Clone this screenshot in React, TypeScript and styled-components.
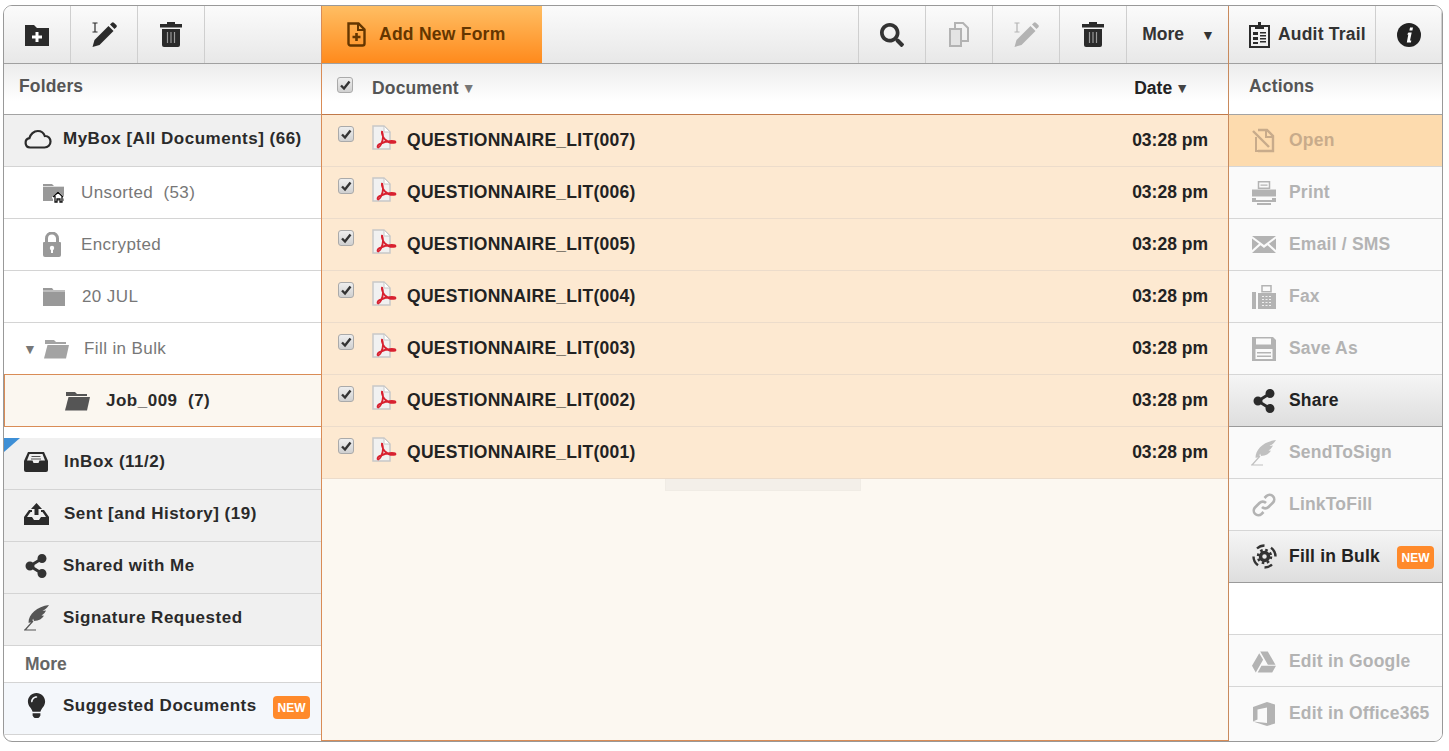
import React from "react";
import styled, { createGlobalStyle } from "styled-components";
import { FaSearch, FaShareAlt, FaGoogleDrive, FaLightbulb } from "react-icons/fa";

const GlobalStyle = createGlobalStyle`
  html, body {
    margin: 0;
    padding: 0;
    background: #fff;
    overflow: hidden;
    font-family: "Liberation Sans", Arial, sans-serif;
  }
`;

const Frame = styled.div`
  display: flex;
  width: 1440px;
  height: 737px;
  margin: 5px 0 0 3px;
  box-sizing: border-box;
  border: 1px solid #999;
  border-radius: 9px;
  overflow: hidden;
  background: #fff;
`;

const Column = styled.div<{ $width: number }>`
  display: flex;
  flex-direction: column;
  width: ${(p) => p.$width}px;
  flex: none;
`;

const Toolbar = styled.div`
  display: flex;
  height: 58px;
  flex: none;
  box-sizing: border-box;
  border-bottom: 1px solid #a0a0a0;
  background: linear-gradient(#fbfbfb, #e8e8e8);
`;

const ToolButton = styled.div<{ $width?: number; $edge?: "left" | "right" }>`
  display: flex;
  align-items: center;
  justify-content: center;
  width: ${(p) => p.$width ?? 67}px;
  flex: none;
  box-sizing: border-box;
  ${(p) => (p.$edge === "left" ? "border-left: 1px solid #cfcfcf;" : "border-right: 1px solid #cfcfcf;")}
  font-size: 17.5px;
  font-weight: bold;
  color: #333;
`;

const MoreButton = styled(ToolButton)`
  padding-left: 2px;
`;

const AuditButton = styled(ToolButton)`
  justify-content: flex-start;
  gap: 8px;
  padding-left: 20px;
  letter-spacing: 0.2px;
`;

const Spacer = styled.div`
  flex: 1;
`;

const AddForm = styled.div`
  display: flex;
  align-items: center;
  gap: 13px;
  width: 220px;
  box-sizing: border-box;
  padding-left: 25px;
  background: linear-gradient(#ffbe63, #ff8a1c);
  font-size: 17.5px;
  font-weight: bold;
  letter-spacing: 0.25px;
  color: #643600;
`;

const MoreCaret = styled.span`
  margin-left: 17px;
  font-size: 14px;
  color: #333;
`;

const ColumnHead = styled.div<{ $pad?: number }>`
  display: flex;
  align-items: center;
  height: 51px;
  flex: none;
  box-sizing: border-box;
  padding: 0 15px 6px ${(p) => p.$pad ?? 15}px;
  border-bottom: 1px solid #a3a3a3;
  background: linear-gradient(#ececec, #fff 75%);
  font-size: 17.5px;
  font-weight: bold;
  letter-spacing: 0.15px;
  color: #555;
`;

const DocColumn = styled(Column)`
  box-sizing: border-box;
  border-left: 1px solid #d98c56;
  border-right: 1px solid #c98a5c;
  border-bottom: 1px solid #d98c56;
  background: #fcf8f1;
`;

const DocHead = styled(ColumnHead)`
  padding: 0 39px 2px 15px;
  border-bottom-color: #c0794a;
`;

const DocTitle = styled.div`
  display: flex;
  align-items: center;
  gap: 3px;
  margin-left: 19px;
  flex: 1;
  color: #555;
`;

const SortCaret = styled.span`
  font-size: 14px;
  color: #777;
`;

const DateTitle = styled.div`
  display: flex;
  align-items: center;
  gap: 3px;
  letter-spacing: 0;
  color: #222;
`;

const DateCaret = styled(SortCaret)`
  color: #444;
`;

const DocRow = styled.div`
  display: flex;
  align-items: center;
  height: 52px;
  box-sizing: border-box;
  padding: 0 20px 0 16px;
  border-bottom: 1px solid #ecdccb;
  background: #fde9d1;
  font-size: 17.5px;
  font-weight: bold;
  color: #222;
`;

const DocIcon = styled.span`
  display: flex;
  margin-left: 18px;
  transform: translateY(-3px);
`;

const DocName = styled.span`
  flex: 1;
  margin-left: 9px;
  letter-spacing: 0.27px;
`;

const TabStub = styled.div`
  width: 196px;
  height: 12px;
  margin-left: 343px;
  background: #f3efe9;
  border: 1px solid #f0ece5;
  border-top: none;
  box-sizing: border-box;
`;

const Box = styled.span<{ $nudge?: number }>`
  display: flex;
  align-items: center;
  justify-content: center;
  width: 16px;
  height: 16px;
  flex: none;
  box-sizing: border-box;
  transform: translateY(${(p) => p.$nudge ?? -7}px);
  border: 1px solid #aaa;
  border-radius: 3px;
  background: linear-gradient(#eee, #d0d0d0);
`;

const List = styled.div`
  display: flex;
  flex-direction: column;
  flex: 1;
`;

type FolderTone = "plain" | "root" | "grey" | "pick" | "tip";

const folderBg: Record<FolderTone, string> = {
  plain: "#fff",
  root: "#f0f0f0",
  grey: "#f0f0f0",
  pick: "#fbf7f0",
  tip: "#f4f7fb",
};

const folderPad: Record<FolderTone, number> = {
  plain: 0,
  root: 4,
  grey: 4,
  pick: 0,
  tip: 6,
};

const FolderRow = styled.div<{ $tone: FolderTone; $indent: number }>`
  position: relative;
  display: flex;
  align-items: center;
  height: 52px;
  flex: none;
  box-sizing: border-box;
  padding-left: ${(p) => p.$indent}px;
  padding-bottom: ${(p) => folderPad[p.$tone]}px;
  background: ${(p) => folderBg[p.$tone]};
  border-bottom: 1px solid #d4d4d4;
  font-size: 17px;
  font-weight: ${(p) => (p.$tone === "plain" ? "normal" : "bold")};
  letter-spacing: ${(p) => (p.$tone === "plain" ? "0.4px" : "0.5px")};
  color: ${(p) => (p.$tone === "plain" ? "#777" : "#2a2a2a")};
  white-space: pre;
  ${(p) =>
    p.$tone === "pick"
      ? `border: 1px solid #d98c56; margin-top: -1px; height: 53px; margin-right: -1px; z-index: 1;`
      : ""}
`;

const IconSlot = styled.span<{ $width: number }>`
  display: flex;
  align-items: center;
  width: ${(p) => p.$width}px;
  flex: none;
`;

const Gap = styled.div`
  height: 11px;
  flex: none;
  background: #fff;
`;

const CornerFlag = styled.span`
  position: absolute;
  left: 0;
  top: 0;
  width: 0;
  height: 0;
  border-top: 14px solid #3d8fd6;
  border-right: 16px solid transparent;
`;

const MoreLabel = styled.div`
  display: flex;
  align-items: center;
  height: 37px;
  flex: none;
  box-sizing: border-box;
  padding-left: 21px;
  border-bottom: 1px solid #d4d4d4;
  font-size: 17.5px;
  font-weight: bold;
  color: #666;
`;

const NewBadge = styled.span<{ $top: number; $right: number }>`
  position: absolute;
  top: ${(p) => p.$top}px;
  right: ${(p) => p.$right}px;
  width: 37px;
  height: 23px;
  border-radius: 4px;
  background: #ff8a2b;
  color: #fff;
  font-size: 12px;
  font-weight: bold;
  letter-spacing: 0;
  line-height: 24px;
  text-align: center;
`;

type ActionTone = "off" | "on" | "open";

const ActionRow = styled.div<{ $tone: ActionTone; $low?: boolean }>`
  position: relative;
  display: flex;
  align-items: center;
  height: 52px;
  flex: none;
  box-sizing: border-box;
  padding-left: 20px;
  padding-top: ${(p) => (p.$low ? 2 : 0)}px;
  font-size: 17.5px;
  font-weight: bold;
  letter-spacing: 0.2px;
  border-bottom: 1px solid ${(p) => (p.$tone === "on" ? "#9a9a9a" : "#d6d6d6")};
  color: ${(p) => (p.$tone === "on" ? "#222" : p.$tone === "open" ? "#c8ab8b" : "#b3b3b3")};
  background: ${(p) =>
    p.$tone === "on"
      ? "linear-gradient(#f5f5f5, #dedede)"
      : p.$tone === "open"
      ? "#fddbae"
      : "#fafafa"};

  &:last-child {
    flex: 1;
    padding-bottom: 3px;
    border-bottom: none;
  }
`;

const ActionGap = styled.div`
  height: 52px;
  flex: none;
  box-sizing: border-box;
  border-bottom: 1px solid #d6d6d6;
  background: #fff;
`;

const ActionIcon = styled.span`
  display: flex;
  align-items: center;
  justify-content: center;
  width: 30px;
  margin-right: 10px;
  flex: none;
`;

const Check = () => (
  <svg width="12" height="12" viewBox="0 0 12 12">
    <path d="M2 6.5 5 9.5 10.5 2.5" fill="none" stroke="#333" strokeWidth="2.4" />
  </svg>
);

const FolderPlus = () => (
  <svg width="24" height="22" viewBox="0 0 24 22">
    <path d="M0 1h9l3 3h12v18H0z" fill="#2b2b2b" />
    <path d="M12 8v10M7 13h10" stroke="#fff" strokeWidth="3" />
  </svg>
);

const Rename = ({ color }: { color: string }) => (
  <svg width="26" height="26" viewBox="0 0 26 26">
    <path d="M1.5 1h5M1.5 10h5M4 1v9" fill="none" stroke={color} strokeWidth="1.2" />
    <path d="M1.5 25l2-7L17.5 4l5 5L8.5 23z" fill={color} />
    <path d="M19 2.5l1.8-1.8a1.5 1.5 0 0 1 2.1 0l2.4 2.4a1.5 1.5 0 0 1 0 2.1L23.5 7z" fill={color} />
  </svg>
);

const Trash = () => (
  <svg width="22" height="25" viewBox="0 0 22 25">
    <path d="M7 0h8v2h7v3.5H0V2h7z" fill="#2b2b2b" />
    <path d="M2 7h18v16a2 2 0 0 1-2 2H4a2 2 0 0 1-2-2z" fill="#2b2b2b" />
    <path d="M7.5 10v11M11 10v11M14.5 10v11" stroke="#999" strokeWidth="1.2" />
  </svg>
);

const AddDoc = () => (
  <svg width="19" height="25" viewBox="0 0 19 25">
    <path d="M1.5 1.5h10l6 6v14a2 2 0 0 1-2 2h-12a2 2 0 0 1-2-2z" fill="none" stroke="#643600" strokeWidth="2.4" />
    <path d="M11 1.5V8h6.5" fill="none" stroke="#643600" strokeWidth="2" />
    <path d="M9.5 11v8M5.5 15h8" stroke="#643600" strokeWidth="2.6" />
  </svg>
);

const Copies = () => (
  <svg width="20" height="25" viewBox="0 0 20 25">
    <path d="M1 7h11v17H1z" fill="#e4e4e4" stroke="#b3b3b3" strokeWidth="2" />
    <path d="M6 6V1h8l5 5v13h-6" fill="none" stroke="#b3b3b3" strokeWidth="2" />
  </svg>
);

const Clipboard = () => (
  <svg width="21" height="26" viewBox="0 0 21 26">
    <path d="M1 4h19v21H1z" fill="none" stroke="#2b2b2b" strokeWidth="2" />
    <path d="M6 7V3h3V0h3v3h3v4z" fill="#2b2b2b" />
    <path d="M4 10h5v3H4zM4 15h5v3H4zM4 20h5v2H4zM11 10h6v1.5h-6zM11 13h6v1.5h-6zM11 16h6v1.5h-6zM11 19h6v1.5h-6z" fill="#2b2b2b" />
  </svg>
);

const Info = () => (
  <svg width="24" height="24" viewBox="0 0 24 24">
    <circle cx="12" cy="12" r="12" fill="#222" />
    <path d="M13 4.5h3l-.6 3h-3zM11.5 9.5h3.2l-1.7 8h1.3l-.4 2H9.8l1.5-8h-1.2z" fill="#fff" />
  </svg>
);

const Pdf = () => (
  <svg width="26" height="26" viewBox="0 0 26 26">
    <path d="M1 1h11l6 6v17H1z" fill="#f1f1f1" stroke="#c8c8c8" strokeWidth="1.5" />
    <path d="M12 1l6 6h-6z" fill="#fff" stroke="#c8c8c8" />
    <path
      d="M10 6c-.6 3 1 6 3 8.5 2.5 2.5 6 4 10 3.2.8-.3.6-1.5-1-1.6-5-.4-10 .6-14.5 3-2 1.2-2.5 3-1.5 3.4 1.5.4 5-5 5-11 0-2.5-1-5-1-5.5z"
      fill="none"
      stroke="#d8202f"
      strokeWidth="1.8"
    />
  </svg>
);

const Cloud = () => (
  <svg width="28" height="20" viewBox="0 0 28 20">
    <path
      d="M6 18.5a4.7 4.7 0 0 1-.6-9.3C6.4 5.4 9.8 2 13.8 2c3.4 0 6 2 7 5 3.5-.2 5.7 2.4 5.7 5.5 0 3.3-2.5 6-6 6z"
      fill="none"
      stroke="#2b2b2b"
      strokeWidth="2.2"
    />
  </svg>
);

const FolderHome = () => (
  <svg width="23" height="20" viewBox="0 0 23 20">
    <path d="M0 1h9l2 2h10v15H0z" fill="#999" />
    <path d="M0 3.5h21" stroke="#ddd" strokeWidth="1" />
    <path d="M9 14l6-6 6.5 6v1.5H20V20h-3.5v-3.5h-3V20H10v-4.5H9z" fill="#fff" />
    <path d="M10 14l5-4.8 5 4.8M12 13v6h2v-3h3v3h2v-6" fill="none" stroke="#111" strokeWidth="1.3" />
  </svg>
);

const Lock = () => (
  <svg width="18" height="25" viewBox="0 0 18 25">
    <path d="M3.5 11V6.5a5.5 5.5 0 0 1 11 0V11" fill="none" stroke="#999" strokeWidth="3" />
    <path d="M1 10h16a1 1 0 0 1 1 1v12a2 2 0 0 1-2 2H2a2 2 0 0 1-2-2V11a1 1 0 0 1 1-1z" fill="#999" />
    <circle cx="9" cy="16" r="2.2" fill="#fff" />
    <path d="M8 16h2v5H8z" fill="#fff" />
  </svg>
);

const Folder = () => (
  <svg width="22" height="20" viewBox="0 0 22 20">
    <path d="M0 1h9l1.5 2H22v16H0z" fill="#999" />
    <path d="M0 4h22" stroke="#e2e2e2" strokeWidth="1" />
  </svg>
);

const FolderOpen = ({ color }: { color: string }) => (
  <svg width="25" height="20" viewBox="0 0 25 20">
    <path d="M1 1h9l2 2h10v2H1z" fill={color} />
    <path d="M3.5 6H25l-3 13.5H0z" fill={color} />
  </svg>
);

const Tray = () => (
  <svg width="24" height="20" viewBox="0 0 24 20">
    <path d="M4 0h16l4 9v9a2 2 0 0 1-2 2H2a2 2 0 0 1-2-2V9z" fill="#2b2b2b" />
    <path d="M5.5 2h13L21 8.5h-5.500l-1 2.500h-5l-1-2.500H3z" fill="#f0f0f0" />
    <path d="M7.5 4.5h9M7 7h10" stroke="#555" strokeWidth="1" />
  </svg>
);

const Outbox = () => (
  <svg width="25" height="22" viewBox="0 0 25 22">
    <path d="M12.5 0L18 6h-3.500v6h-4V6H7z" fill="#2b2b2b" />
    <path d="M5 7h3v2H6.5L3 14h5l2 3h5l2-3h5l-3.500-5H17V7h3l5 7v8H0v-8z" fill="#2b2b2b" />
  </svg>
);

const Quill = ({ color }: { color: string }) => (
  <svg width="26" height="26" viewBox="0 0 26 26">
    <path d="M25 0C23 3 21.500 4.500 18.500 6l3.500-.5c-1 2-2 3.500-4.500 5l2.500.2c-2 3-5 5-10 5.300l-1-2.500-1 4c-1.500 0-2.500 0-3.500.3C4.500 9 13 1.500 25 0z" fill={color} />
    <path d="M1 25l8-9M0 25h12" stroke={color} strokeWidth="1.2" fill="none" />
  </svg>
);

const Print = () => (
  <svg width="24" height="24" viewBox="0 0 24 24">
    <path d="M6.5.8h11v6.500h-11z" fill="none" stroke="#b3b3b3" strokeWidth="1.5" />
    <path d="M8.5 3.500h7v1.200h-7z" fill="#b3b3b3" />
    <path d="M0 8.500h24v7H0zM0 17h4v2h16v-2h4v4H0zM5 22h14v2H5z" fill="#b3b3b3" />
  </svg>
);

const Mail = () => (
  <svg width="24" height="17" viewBox="0 0 24 17">
    <path d="M0 0h24L12 9z" fill="#b3b3b3" />
    <path d="M0 2.500l7 5.300L0 14zM24 2.500l-7 5.300 7 6.200z" fill="#b3b3b3" />
    <path d="M0 17l8.500-7.800L12 12l3.500-2.800L24 17z" fill="#b3b3b3" />
  </svg>
);

const Fax = () => (
  <svg width="24" height="24" viewBox="0 0 24 24">
    <path d="M0 7h4v17H0z" fill="#b3b3b3" />
    <path d="M10 .8h9v6h-9z" fill="none" stroke="#b3b3b3" strokeWidth="1.5" />
    <path d="M6 8h18v16H6z" fill="#b3b3b3" />
    <path d="M10 11.500h10M10 14.500h10M10 17.500h10M10 20.500h10" stroke="#eee" strokeWidth="1" strokeDasharray="2 1.5" />
  </svg>
);

const Floppy = () => (
  <svg width="24" height="24" viewBox="0 0 24 24">
    <path d="M0 0h21l3 3v21H0z" fill="#b3b3b3" />
    <path d="M4 1.500h15v6H4z" fill="#fafafa" />
    <path d="M3.500 12h17v10h-17z" fill="#fafafa" />
    <path d="M5 15h14v1.500H5zM5 18.500h14V20H5z" fill="#b3b3b3" />
  </svg>
);

const OpenDoc = () => (
  <svg width="25" height="25" viewBox="0 0 25 25">
    <path d="M6 2h9l6 6v15H6" fill="none" stroke="#c8ab8b" strokeWidth="2.4" />
    <path d="M14 2v7h7" fill="none" stroke="#c8ab8b" strokeWidth="2" />
    <path d="M1 3l16 16" stroke="#c8ab8b" strokeWidth="2.4" fill="none" />
    <path d="M4 9v14h6" stroke="#c8ab8b" strokeWidth="2" fill="none" />
  </svg>
);

const ChainLink = () => (
  <svg width="24" height="24" viewBox="0 0 24 24">
    <path
      d="M10 14a4.500 4.500 0 0 0 6.500 0l4.500-4.500a4.600 4.600 0 0 0-6.500-6.500L12.500 5M14 10a4.500 4.500 0 0 0-6.500 0L3 14.500A4.600 4.600 0 0 0 9.500 21l2-2"
      fill="none"
      stroke="#b3b3b3"
      strokeWidth="2.6"
    />
  </svg>
);

const BulkGear = () => (
  <svg width="25" height="25" viewBox="0 0 25 25">
    <path d="M5 4.500A11 11 0 0 1 12.500 1.500M20 20.500a11 11 0 0 1-7.500 3" fill="none" stroke="#333" strokeWidth="2.4" />
    <path d="M1.500 12.500a11 11 0 0 0 4.500 8.800M23.500 12.500a11 11 0 0 0-4.500-8.800" fill="none" stroke="#333" strokeWidth="2.4" />
    <circle cx="12.5" cy="12.5" r="4" fill="none" stroke="#333" strokeWidth="3.5" />
    <circle cx="12.5" cy="12.5" r="6.5" fill="none" stroke="#333" strokeWidth="2.5" strokeDasharray="2.5 2.6" />
  </svg>
);

const OfficeLogo = () => (
  <svg width="22" height="24" viewBox="0 0 22 24">
    <path d="M0 5L14 0l8 2.500v19L14 24 0 19.500l14 1.500V5.500L4.500 7.500v10L0 19.500z" fill="#b3b3b3" />
  </svg>
);

const docs = ["007", "006", "005", "004", "003", "002", "001"];

const folders: { label: string; width: number; icon: React.ReactNode }[] = [
  { label: "Unsorted  (53)", width: 38, icon: <FolderHome /> },
  { label: "Encrypted", width: 38, icon: <Lock /> },
  { label: "20 JUL", width: 39, icon: <Folder /> },
];

const offActions: { label: string; icon: React.ReactNode }[] = [
  { label: "Print", icon: <Print /> },
  { label: "Email / SMS", icon: <Mail /> },
  { label: "Fax", icon: <Fax /> },
  { label: "Save As", icon: <Floppy /> },
];

export default function App() {
  return (
    <>
      <GlobalStyle />
      <Frame>
        <Column $width={317}>
          <Toolbar>
            <ToolButton><FolderPlus /></ToolButton>
            <ToolButton><Rename color="#2b2b2b" /></ToolButton>
            <ToolButton><Trash /></ToolButton>
            <Spacer />
          </Toolbar>
          <ColumnHead>Folders</ColumnHead>
          <List>
            <FolderRow $tone="root" $indent={20}>
              <IconSlot $width={39}><Cloud /></IconSlot>
              MyBox [All Documents] (66)
            </FolderRow>
            {folders.map((f) => (
              <FolderRow key={f.label} $tone="plain" $indent={39}>
                <IconSlot $width={f.width}>{f.icon}</IconSlot>
                {f.label}
              </FolderRow>
            ))}
            <FolderRow $tone="plain" $indent={19}>
              <IconSlot $width={21}><SortCaret>▼</SortCaret></IconSlot>
              <IconSlot $width={40}><FolderOpen color="#a3a3a3" /></IconSlot>
              Fill in Bulk
            </FolderRow>
            <FolderRow $tone="pick" $indent={60}>
              <IconSlot $width={41}><FolderOpen color="#555" /></IconSlot>
              Job_009  (7)
            </FolderRow>
            <Gap />
            <FolderRow $tone="grey" $indent={20}>
              <CornerFlag />
              <IconSlot $width={40}><Tray /></IconSlot>
              InBox (11/2)
            </FolderRow>
            <FolderRow $tone="grey" $indent={20}>
              <IconSlot $width={40}><Outbox /></IconSlot>
              Sent [and History] (19)
            </FolderRow>
            <FolderRow $tone="grey" $indent={20}>
              <IconSlot $width={39}><FaShareAlt size={24} color="#333" /></IconSlot>
              Shared with Me
            </FolderRow>
            <FolderRow $tone="grey" $indent={20}>
              <IconSlot $width={39}><Quill color="#555" /></IconSlot>
              Signature Requested
            </FolderRow>
            <MoreLabel>More</MoreLabel>
            <FolderRow $tone="tip" $indent={20}>
              <IconSlot $width={39}><FaLightbulb size={25} color="#2b2b2b" /></IconSlot>
              Suggested Documents
              <NewBadge $top={13} $right={11}>NEW</NewBadge>
            </FolderRow>
          </List>
        </Column>

        <DocColumn $width={908}>
          <Toolbar>
            <AddForm><AddDoc />Add New Form</AddForm>
            <Spacer />
            <ToolButton $edge="left"><FaSearch size={24} color="#333" /></ToolButton>
            <ToolButton $edge="left"><Copies /></ToolButton>
            <ToolButton $edge="left"><Rename color="#b3b3b3" /></ToolButton>
            <ToolButton $edge="left"><Trash /></ToolButton>
            <MoreButton $edge="left" $width={102}>
              More<MoreCaret>▼</MoreCaret>
            </MoreButton>
          </Toolbar>
          <DocHead>
            <Box $nudge={-3}><Check /></Box>
            <DocTitle>Document<SortCaret>▼</SortCaret></DocTitle>
            <DateTitle>Date<DateCaret>▼</DateCaret></DateTitle>
          </DocHead>
          {docs.map((n) => (
            <DocRow key={n}>
              <Box><Check /></Box>
              <DocIcon><Pdf /></DocIcon>
              <DocName>QUESTIONNAIRE_LIT({n})</DocName>
              03:28 pm
            </DocRow>
          ))}
          <TabStub />
        </DocColumn>

        <Column $width={213}>
          <Toolbar>
            <AuditButton $width={147}>
              <Clipboard />
              Audit Trail
            </AuditButton>
            <ToolButton $width={66}><Info /></ToolButton>
          </Toolbar>
          <ColumnHead $pad={20}>Actions</ColumnHead>
          <List>
            <ActionRow $tone="open">
              <ActionIcon><OpenDoc /></ActionIcon>
              Open
            </ActionRow>
            {offActions.map((a) => (
              <ActionRow key={a.label} $tone="off">
                <ActionIcon>{a.icon}</ActionIcon>
                {a.label}
              </ActionRow>
            ))}
            <ActionRow $tone="on">
              <ActionIcon><FaShareAlt size={24} color="#2b2b2b" /></ActionIcon>
              Share
            </ActionRow>
            <ActionRow $tone="off">
              <ActionIcon><Quill color="#c0c0c0" /></ActionIcon>
              SendToSign
            </ActionRow>
            <ActionRow $tone="off">
              <ActionIcon><ChainLink /></ActionIcon>
              LinkToFill
            </ActionRow>
            <ActionRow $tone="on">
              <ActionIcon><BulkGear /></ActionIcon>
              Fill in Bulk
              <NewBadge $top={15} $right={8}>NEW</NewBadge>
            </ActionRow>
            <ActionGap />
            <ActionRow $tone="off" $low>
              <ActionIcon><FaGoogleDrive size={24} color="#b3b3b3" /></ActionIcon>
              Edit in Google
            </ActionRow>
            <ActionRow $tone="off" $low>
              <ActionIcon><OfficeLogo /></ActionIcon>
              Edit in Office365
            </ActionRow>
          </List>
        </Column>
      </Frame>
    </>
  );
}
